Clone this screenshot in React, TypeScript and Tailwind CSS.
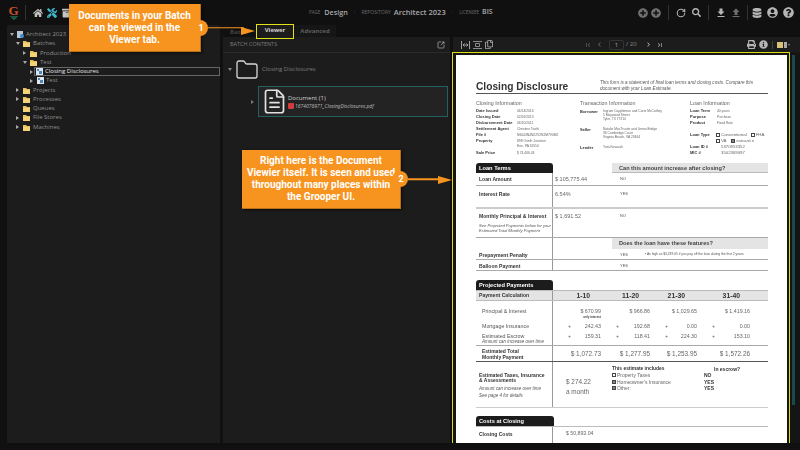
import React from 'react'
import {
  FaHome,
  FaTools,
  FaArchive,
  FaPlusCircle,
  FaSearch,
  FaDatabase,
  FaUserCircle,
  FaQuestionCircle,
  FaPrint,
  FaInfoCircle,
  FaRegCopy,
} from 'react-icons/fa'
import {
  MdFileDownload,
  MdFileUpload,
  MdFirstPage,
  MdLastPage,
  MdChevronLeft,
  MdChevronRight,
} from 'react-icons/md'
import { Folder, FileText, RotateCw, SquareArrowOutUpRight } from 'lucide-react'

const Caret = ({ open }: { open?: boolean }) => (
  <span className="w-[7px] shrink-0 flex justify-center">
    {open === undefined ? null : open ? (
      <span className="w-0 h-0 border-x-[2px] border-x-transparent border-t-[3px] border-t-[#aaa]" />
    ) : (
      <span className="w-0 h-0 border-y-[2px] border-y-transparent border-l-[3px] border-l-[#aaa]" />
    )}
  </span>
)

const TreeFolder = () => (
  <svg width="8" height="7" viewBox="0 0 8 7" className="shrink-0">
    <path d="M0 1h3l1 1h3v5H0z" fill="#e9c25f" />
    <path d="M0 3h7v4H0z" fill="#f3d376" />
  </svg>
)

const BatchIcon = () => (
  <svg width="7" height="7" viewBox="0 0 7 7" className="shrink-0">
    <rect width="7" height="7" fill="#dfe6ee" />
    <path d="M1 1h2v2H1zM3 3h3v3H3z" fill="#4d86b8" />
  </svg>
)

const TreeRow = ({
  level,
  label,
  open,
  batch,
  selected,
  root,
}: {
  level: number
  label: string
  open?: boolean
  batch?: boolean
  selected?: boolean
  root?: boolean
}) => {
  const pad = ['pl-[1px]', 'pl-[7px]', 'pl-[14px]', 'pl-[21px]'][level]
  return (
    <div className={`h-[9.25px] flex items-center ${pad} text-[#8f8f8f]`}>
      <Caret open={open} />
      <div
        className={`flex-1 h-full flex items-center gap-[2px] ${selected ? 'border border-[#666] -ml-[1px] pl-[1px] text-[#e6e6e6]' : 'pl-[2px]'}`}
      >
        {root ? (
          <svg width="7" height="7" viewBox="0 0 7 7" className="shrink-0">
            <rect width="6" height="7" fill="#b9c6d6" />
            <circle cx="5" cy="5" r="2" fill="#3f87c9" />
          </svg>
        ) : batch ? (
          <BatchIcon />
        ) : (
          <TreeFolder />
        )}
        <span className="whitespace-nowrap">{label}</span>
      </div>
    </div>
  )
}

const Tree = () => (
  <div className="w-[213px] h-full bg-[#1c1c1c] rounded-t-[2px] pt-[5px] text-[6px]">
    <TreeRow level={0} root open label="Architect 2023" />
    <TreeRow level={1} open label="Batches" />
    <TreeRow level={2} open={false} label="Production" />
    <TreeRow level={2} open label="Test" />
    <TreeRow level={3} open={false} batch selected label="Closing Disclosures" />
    <TreeRow level={3} open={false} batch label="Test" />
    <TreeRow level={1} open={false} label="Projects" />
    <TreeRow level={1} open={false} label="Processes" />
    <TreeRow level={1} label="Queues" />
    <TreeRow level={1} open={false} label="File Stores" />
    <TreeRow level={1} open={false} label="Machines" />
  </div>
)

const Divider = () => <span className="block w-px h-[15px] bg-[#333] shrink-0" />

const Header = () => (
  <div className="h-[25px] shrink-0 flex items-center text-[#9a9a9a]">
    <div className="w-[33px] shrink-0 flex items-center pl-[9px]">
      <div className="w-[9px] flex flex-col items-center">
        <span className="font-['Liberation_Serif',serif] font-bold text-[13px] leading-[10px] text-[#c8502a]">G</span>
        <svg width="8" height="4" viewBox="0 0 8 4">
          <path d="M0 0h8M1.500 2h5M3 4h2" stroke="#2b9a7a" strokeWidth="1" />
        </svg>
      </div>
      <span className="ml-[7px] w-px h-[15px] bg-[#333]" />
    </div>
    <FaHome className="w-[10px] h-[10px] text-[#c4c4c4] shrink-0" />
    <FaTools className="ml-[4px] w-[10px] h-[10px] text-[#3fb6c9] shrink-0" />
    <FaArchive className="ml-[5px] w-[10px] h-[10px] text-[#c4c4c4] shrink-0" />
    <div className="ml-[237px] w-[190px] shrink-0 flex items-center whitespace-nowrap">
      <span className="text-[4.5px] text-[#6c6c6c] mr-[4px]">PAGE</span>
      <span className="text-[7.2px] font-semibold text-[#a8a8a8]">Design</span>
      <span className="text-[6px] mx-[6px] text-[#666]">·</span>
      <span className="text-[5px] text-[#6c6c6c] mr-[3px]">REPOSITORY</span>
      <span className="text-[7.500px] font-semibold text-[#a8a8a8]">Architect 2023</span>
      <span className="text-[6px] mx-[6px] text-[#666]">·</span>
      <span className="text-[4.500px] text-[#6c6c6c] mr-[3px]">LICENSEE</span>
      <span className="text-[7px] font-semibold text-[#a8a8a8]">BIS</span>
    </div>
    <div className="flex-1 flex items-center justify-end pr-[6px] gap-[3px] text-[#b5b5b5]">
      <FaPlusCircle className="w-[10px] h-[10px] text-[#6f6f6f]" />
      <FaPlusCircle className="w-[10px] h-[10px] text-[#6f6f6f]" />
      <span className="mx-[4px]"><Divider /></span>
      <RotateCw className="w-[10px] h-[10px]" strokeWidth={2.5} />
      <FaSearch className="ml-[3px] w-[9px] h-[9px]" />
      <span className="mx-[3.500px]"><Divider /></span>
      <MdFileDownload className="w-[12px] h-[12px]" />
      <MdFileUpload className="w-[12px] h-[12px] text-[#6f6f6f]" />
      <span className="mx-[1.500px]"><Divider /></span>
      <FaDatabase className="w-[10px] h-[10px]" />
      <FaUserCircle className="ml-[2px] w-[11px] h-[11px]" />
      <FaQuestionCircle className="ml-[2px] w-[11px] h-[11px]" />
    </div>
  </div>
)

const BatchPanel = () => (
  <div className="w-[227px] h-full shrink-0 bg-[#1c1c1c]">
    <div className="h-[16px] flex items-center justify-between pl-[7px] pr-[5px] border-b border-[#2a2a2a] text-[#7d7d7d] text-[5.5px]">
      <span>BATCH CONTENTS</span>
      <SquareArrowOutUpRight className="w-[8px] h-[8px] text-[#bbb]" strokeWidth={2} />
    </div>
    <div className="pl-[2px] pt-[8px] flex items-center text-[#7d7d7d] text-[6px] h-[25px]">
      <span className="w-[10px] flex justify-center">
        <span className="w-0 h-0 border-x-[2px] border-x-transparent border-t-[3px] border-t-[#888]" />
      </span>
      <Folder className="w-[24px] h-[24px] text-[#d8d8d8] shrink-0" strokeWidth={1.3} />
      <span className="ml-[3px]">Closing Disclosures</span>
    </div>
    <div className="mt-[8px] flex items-center pl-[28px] pr-[2px]">
      <span className="shrink-0 w-0 h-0 border-y-[2px] border-y-transparent border-l-[3px] border-l-[#777]" />
      <div className="ml-[4px] flex-1 h-[31px] border border-[#24605f] bg-[#232323] flex items-center pl-[2px]">
        <FileText className="w-[27px] h-[27px] text-[#e2e2e2] shrink-0" strokeWidth={1.5} />
        <div>
          <div className="text-[6px] leading-[8px] text-[#cfcfcf]">Document (1)</div>
          <div className="flex items-center gap-[1px] mt-[1px]">
            <span className="w-[6px] h-[6px] bg-[#d13b3b] rounded-[1px] shrink-0" />
            <span className="text-[5px] leading-[6px] italic text-[#bdbdbd] whitespace-nowrap">1674076971_ClosingDisclosures.pdf</span>
          </div>
        </div>
      </div>
    </div>
  </div>
)

const ViewerToolbar = () => (
  <div className="h-[15px] shrink-0 flex items-center text-[#8c8c8c] pl-[8px] pr-[10px]">
    <svg width="9" height="8" viewBox="0 0 9 8" className="shrink-0">
      <path d="M.5 0v8M8.500 0v8M2 4h5M2 4l1.500-1.500M2 4l1.500 1.500M7 4L5.500 2.500M7 4L5.500 5.500" stroke="#a0a0a0" fill="none" />
    </svg>
    <svg width="9" height="8" viewBox="0 0 9 8" className="ml-[3px] shrink-0">
      <path d="M0 .5h9M0 7.500h9M2.500 2.500h4v3h-4z" stroke="#8a8a8a" fill="none" />
    </svg>
    <FaRegCopy className="ml-[3px] w-[8px] h-[9px] text-[#a8a8a8]" />
    <MdFirstPage className="ml-[91px] w-[8px] h-[8px] text-[#666]" />
    <MdChevronLeft className="ml-[3px] w-[9px] h-[9px] text-[#666]" />
    <span className="ml-[5px] w-[15px] h-[10px] border border-[#333] rounded-[2px] text-[6px] leading-[8px] text-center text-[#aaa]">1</span>
    <span className="ml-[2px] text-[6px] text-[#888]">/ 20</span>
    <MdChevronRight className="ml-[7px] w-[9px] h-[9px] text-[#b0b0b0]" />
    <MdLastPage className="ml-[3px] w-[8px] h-[8px] text-[#b0b0b0]" />
    <div className="flex-1 flex items-center justify-end">
      <FaPrint className="w-[9px] h-[9px] text-[#b5b5b5]" />
      <FaInfoCircle className="ml-[3px] w-[9px] h-[9px] text-[#b5b5b5]" />
      <span className="mx-[4px] w-px h-[8px] bg-[#444]" />
      <span className="w-[6px] h-[6px] bg-[#d8c27a] shrink-0" />
      <span className="ml-[1px] w-[3px] h-[6px] bg-[#aaa] shrink-0" />
      <span className="ml-[1px] w-0 h-0 border-x-[1.5px] border-x-transparent border-t-[2px] border-t-[#888]" />
    </div>
  </div>
)

const Info = ({ label, value }: { label: string; value: string }) => (
  <div className="h-[6px] flex items-center">
    <span className="w-[41px] shrink-0 text-[4px] font-bold text-[#333] whitespace-nowrap">{label}</span>
    <span className="text-[3.300px] text-[#666] whitespace-nowrap">{value}</span>
  </div>
)

const Party = ({ label, lines, h }: { label: string; lines: string[]; h: string }) => (
  <div className={`${h} flex pt-[1px]`}>
    <span className="w-[23px] pt-[0.5px] text-[4px] leading-[4px] font-bold text-[#333]">{label}</span>
    <div className="text-[3.300px] leading-[4px] text-[#666] whitespace-nowrap">
      {lines.map((l) => (
        <div key={l}>{l}</div>
      ))}
    </div>
  </div>
)

const LoanInfo = ({ label, value, w, size }: { label: string; value: string; w: string; size: string }) => (
  <div className="h-[6px] flex items-center">
    <span className={`${w} text-[4px] font-bold text-[#333] whitespace-nowrap`}>{label}</span>
    <span className={`${size} text-[#666] whitespace-nowrap`}>{value}</span>
  </div>
)

const Tab = ({ title, w = 'w-[77px]' }: { title: string; w?: string }) => (
  <div className={`${w} h-[10px] shrink-0 bg-[#1c1c1c] rounded-t-[3px] pl-[3px] text-white font-bold text-[5.700px] leading-[10px] whitespace-nowrap`}>
    {title}
  </div>
)

const TermRow = ({
  h,
  label,
  amount,
  answer,
  line,
  note,
  sub,
  pt = 'pt-[3px]',
}: {
  h: string
  label?: string
  amount?: string
  answer?: string
  line: string
  note?: string
  sub?: string[]
  pt?: string
}) => (
  <div className={`${h} flex ${line}`}>
    <div className={`w-[77px] shrink-0 border-r border-[#999] pl-[3px] ${pt}`}>
      <div className="text-[5.100px] leading-[6px] font-bold text-[#333] whitespace-nowrap">{label}</div>
      {sub && (
        <div className="mt-[4px] text-[4.100px] leading-[5px] italic text-[#555] whitespace-nowrap">
          {sub.map((s) => (
            <div key={s}>{s}</div>
          ))}
        </div>
      )}
    </div>
    <div className={`w-[67px] shrink-0 pl-[2px] text-[5.500px] leading-[6px] text-[#666] ${pt}`}>{amount}</div>
    <div className={`flex-1 flex text-[4px] leading-[6px] text-[#555] ${pt}`}>
      <span className="w-[25px] shrink-0">{answer}</span>
      {note && <span className="text-[3.300px] leading-[4px] whitespace-nowrap">{note}</span>}
    </div>
  </div>
)

const PayCell = ({ value, plus, sub }: { value: string; plus?: boolean; sub?: string }) => (
  <div className="text-right text-[5.300px] leading-[6px] text-[#666]">
    {plus && <span className="float-left ml-[15px]">+</span>}
    {value}
    {sub && <div className="mt-[1px] text-[3px] leading-[5px] font-bold text-[#444]">{sub}</div>}
  </div>
)

const PayRow = ({
  h,
  label,
  sub,
  values,
  plus,
  pt,
  valueSub,
}: {
  h: string
  label: string
  sub?: string
  values: string[]
  plus?: boolean
  pt: string
  valueSub?: string
}) => (
  <div className={`${h} flex`}>
    <div className={`w-[77px] shrink-0 border-r border-[#999] pl-[6px] ${pt}`}>
      <div className="text-[5.300px] leading-[6px] text-[#555] whitespace-nowrap">{label}</div>
      {sub && <div className="text-[4.500px] leading-[5px] italic text-[#555] whitespace-nowrap">{sub}</div>}
    </div>
    <div className={`grid grid-cols-[48px_49px_47px_53px] ${pt}`}>
      {values.map((v, i) => (
        <PayCell key={i} value={v} plus={plus} sub={i === 0 ? valueSub : undefined} />
      ))}
    </div>
  </div>
)

const Check = ({ on }: { on?: boolean }) => (
  <span className={`w-[4px] h-[4px] shrink-0 border-[0.5px] border-[#444] ${on ? 'bg-[#888]' : ''}`} />
)

const Doc = () => (
  <div className="w-[331px] h-[388px] bg-white overflow-hidden pt-[25px] pl-[20px] pr-[19px] font-['Liberation_Sans',sans-serif] blur-[0.25px]">
    {/* title */}
    <div className="h-[14px] flex border-b border-[#555]">
      <div className="w-[124px] shrink-0 text-[10.2px] leading-[13px] font-bold text-[#333] whitespace-nowrap">Closing Disclosure</div>
      <div className="text-[4.600px] leading-[5.500px] italic text-[#555] whitespace-nowrap">
        <div>This form is a statement of final loan terms and closing costs. Compare this</div>
        <div>document with your Loan Estimate.</div>
      </div>
    </div>

    {/* info block */}
    <div className="mt-[6px] flex h-[56px]">
      <div className="w-[104px] shrink-0">
        <div className="h-[6px] mb-[2px] text-[5.300px] leading-[6px] text-[#666] whitespace-nowrap">Closing Information</div>
        <Info label="Date Issued" value="06/14/2016" />
        <Info label="Closing Date" value="02/26/2013" />
        <Info label="Disbursement Date" value="06/10/2011" />
        <Info label="Settlement Agent" value="Christine Tooth" />
        <Info label="File #" value="N6044N4N22V2N2M7V0M2" />
        <Info label="Property" value="898 Oneth Junction" />
        <div className="h-[6px] pl-[41px] text-[3.300px] leading-[4px] text-[#666]">Erie, PA 16550</div>
        <Info label="Sale Price" value="$ 74,466.03" />
      </div>
      <div className="w-[110px] shrink-0">
        <div className="h-[6px] mb-[2px] text-[5.300px] leading-[6px] text-[#666] whitespace-nowrap">Transaction Information</div>
        <Party h="h-[18px]" label="Borrower" lines={['Ingram Cappleman and Carie McCathey', '5 Maywood Street', 'Tyler, TX 75710']} />
        <Party h="h-[18px]" label="Seller" lines={['Natalie MacTrustie and Jenna Bridge', '36 Cambridge Court', 'Virginia Beach, VA 23464']} />
        <Party h="h-[6px]" label="Lender" lines={['Yost-Kovacek']} />
      </div>
      <div className="flex-1">
        <div className="h-[6px] mb-[2px] text-[5.300px] leading-[6px] text-[#666] whitespace-nowrap">Loan Information</div>
        <LoanInfo label="Loan Term" value="40 years" w="w-[27px]" size="text-[3.300px]" />
        <LoanInfo label="Purpose" value="Purchase" w="w-[27px]" size="text-[3.300px]" />
        <LoanInfo label="Product" value="Fixed Rate" w="w-[27px]" size="text-[3.300px]" />
        <div className="h-[6px]" />
        <div className="h-[12px] flex">
          <span className="w-[26px] text-[4px] leading-[6px] font-bold text-[#333]">Loan Type</span>
          <div className="text-[4.400px] leading-[6px] text-[#666] whitespace-nowrap">
            <div className="flex items-center gap-[1px]"><Check />Conventional<span className="w-[2px]" /><Check />FHA</div>
            <div className="flex items-center gap-[1px]"><Check />VA<span className="w-[2px]" /><Check on /><span className="ml-[1px] text-[3px]">mateuszek in</span></div>
          </div>
        </div>
        <LoanInfo label="Loan ID #" value="5370953352" w="w-[31px]" size="text-[4.300px]" />
        <LoanInfo label="MIC #" value="3502369097" w="w-[31px]" size="text-[4.300px]" />
      </div>
    </div>

    {/* loan terms */}
    <div className="mt-[7px] flex h-[10px]">
      <Tab title="Loan Terms" />
      <div className="ml-[59px] flex-1 bg-[#e4e4e4] border-b border-[#bbb] pl-[7px] text-[5.600px] leading-[10px] font-bold text-[#444] whitespace-nowrap">
        Can this amount increase after closing?
      </div>
    </div>
    <TermRow h="h-[13px]" label="Loan Amount" amount="$ 105,775.44" answer="NO" line="border-b border-[#aaa]" />
    <TermRow h="h-[23px]" label="Interest Rate" amount="6.54%" answer="YES" line="border-b-2 border-[#ccc]" pt="pt-[5px]" />
    <TermRow
      h="h-[29px]"
      label="Monthly Principal & Interest"
      amount="$ 1,691.52"
      answer="NO"
      line="border-b border-[#aaa]"
      sub={['See Projected Payments below for your', 'Estimated Total Monthly Payment']}
      pt="pt-[4px]"
    />
    <div className="h-[11px] flex">
      <div className="w-[77px] shrink-0 border-r border-[#999]" />
      <div className="ml-[59px] flex-1 bg-[#e4e4e4] pl-[7px] text-[5.600px] leading-[11px] font-bold text-[#444] whitespace-nowrap">
        Does the loan have these features?
      </div>
    </div>
    <TermRow
      h="h-[11px]"
      label="Prepayment Penalty"
      answer="YES"
      line="border-b border-[#aaa]"
      note="• As high as $3,239.05 if you pay off the loan during the first 2 years"
      pt="pt-[2.500px]"
    />
    <TermRow h="h-[11px]" label="Balloon Payment" answer="YES" line="border-b border-[#aaa]" pt="pt-[3px]" />

    {/* projected payments */}
    <div className="mt-[9px]"><Tab title="Projected Payments" /></div>
    <div className="h-[11px] flex bg-[#e4e4e4] border-y border-[#bbb]">
      <div className="w-[77px] shrink-0 border-r border-[#999] pl-[3px] text-[5.100px] leading-[9px] font-bold text-[#333] whitespace-nowrap">Payment Calculation</div>
      <div className="grid grid-cols-[48px_49px_47px_53px] text-right text-[6.800px] leading-[9px] font-bold text-[#333]">
        <span className="pr-[11px]">1-10</span>
        <span className="pr-[11px]">11-20</span>
        <span className="pr-[12px]">21-30</span>
        <span className="pr-[10px]">31-40</span>
      </div>
    </div>
    <PayRow h="h-[19px]" pt="pt-[7px]" label="Principal & Interest" values={['$ 670.99', '$ 966.86', '$ 1,029.65', '$ 1,419.16']} valueSub="only interest" />
    <PayRow h="h-[11px]" pt="pt-[3px]" plus label="Mortgage Insurance" values={['242.43', '192.68', '0.00', '0.00']} />
    <div className="border-b border-[#aaa]">
      <PayRow h="h-[14px]" pt="pt-[2px]" plus label="Estimated Escrow" sub="Amount can increase over time" values={['159.31', '118.41', '224.30', '153.10']} />
    </div>
    <div className="h-[16px] flex border-b border-[#555]">
      <div className="w-[77px] shrink-0 border-r border-[#999] pl-[6px] pt-[3px] text-[5px] leading-[5.500px] font-bold text-[#333]">
        Estimated Total<br />Monthly Payment
      </div>
      <div className="grid grid-cols-[48px_49px_47px_53px] text-right text-[6.400px] leading-[16px] text-[#666] whitespace-nowrap">
        <span>$ 1,072.73</span>
        <span>$ 1,277.95</span>
        <span>$ 1,253.95</span>
        <span>$ 1,572.26</span>
      </div>
    </div>
    <div className="h-[46px] flex border-b border-[#ccc]">
      <div className="w-[77px] shrink-0 border-r border-[#999] pl-[3px] pt-[11px]">
        <div className="text-[5px] leading-[5px] font-bold text-[#333] whitespace-nowrap">Estimated Taxes, Insurance<br />& Assessments</div>
        <div className="mt-[2px] text-[4.500px] leading-[7px] italic text-[#555] whitespace-nowrap">Amount can increase over time<br />See page 4 for details</div>
      </div>
      <div className="w-[59px] shrink-0 pl-[13px] pt-[15px] text-[6.400px] leading-[10px] text-[#666] whitespace-nowrap">$ 274.22<br />a month</div>
      <div className="w-[92px] shrink-0 pt-[4px]">
        <div className="text-[4.900px] leading-[6px] font-bold text-[#333]">This estimate includes</div>
        <div className="text-[5px] leading-[6.500px] text-[#666] whitespace-nowrap">
          <div className="flex items-center gap-[1px]"><Check />Property Taxes</div>
          <div className="flex items-center gap-[1px]"><Check on />Homeowner's Insurance</div>
          <div className="flex items-center gap-[1px]"><Check on />Other:</div>
        </div>
      </div>
      <div className="pt-[4px] text-[5px] font-bold text-[#333]">
        <div className="pl-[10px] leading-[6px] whitespace-nowrap">In escrow?</div>
        <div className="leading-[6.500px]">NO<br />YES<br />YES</div>
      </div>
    </div>

    {/* costs at closing */}
    <div className="mt-[8px]"><Tab title="Costs at Closing" w="w-[78px]" /></div>
    <div className="h-[20px] flex border-t border-[#bbb]">
      <div className="w-[77px] shrink-0 border-r border-[#999] pl-[3px] pt-[4px] text-[5px] leading-[6px] font-bold text-[#333]">Closing Costs</div>
      <div className="pl-[13px] pt-[3px] text-[5.200px] leading-[6px] text-[#666]">$ 50,893.04</div>
    </div>
  </div>
)

const Viewer = () => (
  <div className="relative flex-1 h-full bg-[#1c1c1c] flex flex-col">
    <ViewerToolbar />
    <div className="pl-[3px] pt-[3px] flex gap-[3px] bg-[#151515] flex-1">
      <Doc />
      <div className="ml-[2px] w-[3px] h-[350px] bg-[#1b4a4b]" />
    </div>
    {/* yellow highlight around the page */}
    <div className="absolute left-[-1px] top-[15px] w-[338px] h-[395px] border-[1.5px] border-[#dcdc10] pointer-events-none" />
  </div>
)

const Callout = ({
  className,
  text,
  num,
}: {
  className: string
  text: React.ReactNode
  num: string
}) => (
  <div className={`absolute flex items-center ${className}`}>
    <div className="relative h-full w-full bg-[#f7941f] border-r border-b border-[#b86f18] shadow-[1px_1px_3px_rgba(0,0,0,0.6)] flex items-center justify-center text-center font-['Roboto',sans-serif] font-bold text-white text-[10px] leading-[12px]">
      {text}
      <div className="absolute -right-[8px] top-1/2 -translate-y-1/2 w-[16px] h-[16px] rounded-full bg-[#f7941f] flex items-center justify-center text-[9px]">
        <span className="pl-[2px]">{num}</span>
      </div>
      <div className="absolute left-full ml-[8px] top-1/2 -translate-y-1/2 w-[36px] h-[1.5px] bg-[#f7941f]" />
    </div>
  </div>
)

const ArrowHead = ({ className }: { className: string }) => (
  <div className={`absolute w-0 h-0 border-y-[4px] border-y-transparent border-l-[14px] border-l-[#f7941f] ${className}`} />
)

export default function App() {
  return (
    <div className="relative w-[800px] h-[450px] overflow-hidden bg-[#101010] font-['Open_Sans',sans-serif] flex flex-col">
      <Header />
      <div className="h-[418px] flex pl-[7px] gap-[3px]">
        <Tree />
        <div className="flex-1 flex flex-col">
          <div className="h-[12px] shrink-0 flex items-end pl-[7px] text-[6px] font-bold">
            <span className="w-[26px] text-[#444]">Batch</span>
            <div className="h-[13px] w-[38px] bg-[#1c1c1c] text-[#d0d0d0] text-center leading-[13px]">Viewer</div>
            <div className="h-[12px] w-[42px] bg-[#161616] text-[#5e5e5e] text-center leading-[12px]">Advanced</div>
          </div>
          <div className="flex-1 flex gap-[3px] overflow-hidden">
            <BatchPanel />
            <Viewer />
          </div>
        </div>
      </div>

      {/* annotations */}
      <div className="absolute left-[256px] top-[24px] w-[38px] h-[15px] border border-[#e2e21a]" />
      <Callout
        className="left-[69px] top-[4px] w-[132px] h-[48px]"
        num="1"
        text={<span>Documents in your Batch<br />can be viewed in the<br />Viewer tab.</span>}
      />
      <ArrowHead className="left-[241px] top-[27px]" />
      <Callout
        className="left-[242px] top-[150px] w-[159px] h-[59px]"
        num="2"
        text={<span>Right here is the Document<br />Viewier itself. It is seen and used<br />throughout many places within<br />the Grooper UI.</span>}
      />
      <ArrowHead className="left-[438px] top-[176px]" />
    </div>
  )
}
